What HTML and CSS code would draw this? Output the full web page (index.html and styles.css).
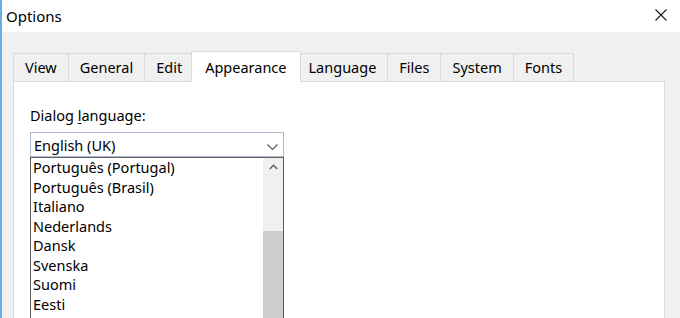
FILE: index.html
```html
<!DOCTYPE html>
<html>
<head>
<meta charset="utf-8">
<title>Options</title>
<link rel="stylesheet" href="styles.css">
</head>
<body>
<div class="window">
  <div class="titlebar">
    <span class="title">Options</span>
    <span class="close">
      <svg width="12" height="12" viewBox="0 0 12 12"><path d="M0.5 0.5 L11.5 11.5 M11.5 0.5 L0.5 11.5" stroke="#1a1a1a" stroke-width="1.1" fill="none"/></svg>
    </span>
  </div>
  <div class="client">
    <div class="tabs">
      <div class="tab">View</div>
      <div class="tab">General</div>
      <div class="tab">Edit</div>
      <div class="tab selected">Appearance</div>
      <div class="tab">Language</div>
      <div class="tab">Files</div>
      <div class="tab">System</div>
      <div class="tab">Fonts</div>
    </div>
    <div class="panel">
      <div class="label">Dialog <u>l</u>anguage:</div>
      <div class="combo">
        <span class="combo-text">English (UK)</span>
        <svg class="combo-arrow" width="11" height="6" viewBox="0 0 11 6"><path d="M0.5 0.5 L5.5 5.5 L10.5 0.5" stroke="#555" stroke-width="1.1" fill="none"/></svg>
      </div>
      <div class="list">
        <ul class="items">
          <li>Português (Portugal)</li>
          <li>Português (Brasil)</li>
          <li>Italiano</li>
          <li>Nederlands</li>
          <li>Dansk</li>
          <li>Svenska</li>
          <li>Suomi</li>
          <li>Eesti</li>
        </ul>
        <div class="scrollbar">
          <div class="sb-up">
            <svg width="9" height="6" viewBox="0 0 9 6"><path d="M0.8 5 L4.5 1.3 L8.2 5" stroke="#606060" stroke-width="1.6" fill="none"/></svg>
          </div>
          <div class="sb-track"></div>
          <div class="sb-thumb"></div>
        </div>
      </div>
    </div>
  </div>
</div>
</body>
</html>
```

FILE: styles.css
```css
* { box-sizing: border-box; }
html, body { margin: 0; padding: 0; }
body {
  width: 680px;
  height: 318px;
  overflow: hidden;
  font-family: "Noto Sans", "Open Sans", sans-serif;
  font-size: 14.5px;
  color: #000;
  background: #fff;
}
.window {
  width: 680px;
  height: 318px;
  border-left: 2px solid #6aaee6;
  display: flex;
  flex-direction: column;
  overflow: hidden;
}
.titlebar {
  height: 32px;
  flex: none;
  background: #fff;
  display: flex;
  align-items: center;
  justify-content: space-between;
  padding-left: 4px;
  padding-right: 13px;
}
.title {
  font-size: 15px;
  line-height: 32px;
  color: #000;
}
.close { display: flex; align-items: center; margin-top: -2px; }
.client {
  flex: 1;
  background: #f0f0f0;
  padding: 19px 15px 0 11px;
  display: flex;
  flex-direction: column;
}
.tabs {
  display: flex;
  align-items: flex-end;
  flex: none;
}
.tab {
  border: 1px solid #d9d9d9;
  border-bottom: none;
  background: #f0f0f0;
  line-height: 27px;
  padding: 0 11px;
  white-space: nowrap;
  color: #000;
}
.tab + .tab { margin-left: -1px; }
.tab.selected {
  background: #fff;
  padding: 2px 13px 1px;
  margin: 0 -2px -1px -3px;
  position: relative;
  z-index: 1;
}
.tab.selected + .tab { margin-left: -2px; }
.panel {
  flex: 1;
  background: #fff;
  border: 1px solid #d9d9d9;
  border-bottom: none;
  padding: 24px 0 0 16px;
}
.label {
  line-height: 19px;
  color: #000;
}
.label u { text-underline-offset: 2px; }
.combo {
  margin-top: 7px;
  width: 254px;
  height: 25px;
  border: 1px solid #abb9cc;
  display: flex;
  align-items: flex-start;
  justify-content: space-between;
  padding: 2px 5px 0 3px;
}
.combo-text { line-height: 21px; }
.combo-arrow { margin-top: 9px; }
.list {
  width: 254px;
  height: 200px;
  border: 1px solid #5c5c5c;
  border-top-color: #646464;
  display: flex;
}
.items {
  list-style: none;
  margin: 0;
  padding: 0 0 0 2px;
  flex: 1;
}
.items li {
  line-height: 19.5px;
  height: 19.5px;
  white-space: nowrap;
}
.scrollbar {
  width: 20px;
  background: #f0f0f0;
  display: flex;
  flex-direction: column;
}
.sb-up {
  height: 20px;
  display: flex;
  align-items: center;
  justify-content: center;
  padding-bottom: 3px;
}
.sb-track { height: 53px; }
.sb-thumb {
  flex: 1;
  background: #cdcdcd;
}
```
